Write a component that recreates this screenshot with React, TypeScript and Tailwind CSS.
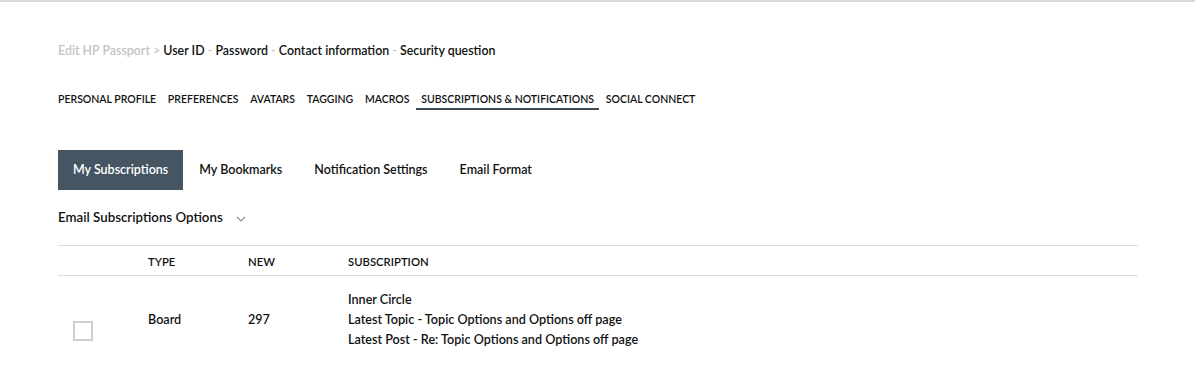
const navItems = [
  "Personal Profile",
  "Preferences",
  "Avatars",
  "Tagging",
  "Macros",
  "Subscriptions & Notifications",
  "Social Connect",
];

const subTabs = ["My Subscriptions", "My Bookmarks", "Notification Settings", "Email Format"];

export default function App() {
  return (
    <div className="min-h-[365px] w-[1195px] bg-white border-t-2 border-[#dadada] font-['Lato',sans-serif] text-[#111]">
      <div className="pl-[58px] pr-[57px]">
        <div className="pt-[40px] h-[80px] text-[12.4px] font-semibold">
          <span className="text-[#c4c4c4]">Edit HP Passport &gt; </span>
          User ID <span className="text-[#c4c4c4]">-</span> Password{" "}
          <span className="text-[#c4c4c4]">-</span> Contact information{" "}
          <span className="text-[#c4c4c4]">-</span> Security question
        </div>

        <nav className="flex gap-[11.7px] text-[10.5px] font-semibold uppercase">
          {navItems.map((item, i) => (
            <div
              key={item}
              className={
                i === 5
                  ? "h-[28px] pt-[10px] px-[5px] -mx-[5px] border-b-2 border-[#3d4d59]"
                  : "h-[28px] pt-[10px]"
              }
            >
              {item}
            </div>
          ))}
        </nav>

        <div className="mt-[40px] flex text-[12.5px] font-semibold">
          {subTabs.map((t, i) => (
            <div
              key={t}
              className={
                i === 0
                  ? "h-[40px] flex items-center px-[15px] bg-[#455561] text-white"
                  : "h-[40px] flex items-center px-[16px]"
              }
            >
              {t}
            </div>
          ))}
        </div>

        <div className="mt-[18px] flex items-center gap-[13px] text-[13.3px] font-semibold">
          Email Subscriptions Options
          <svg width="10" height="6" viewBox="0 0 10 6" className="mt-[2px]">
            <path d="M1 1l4 4 4-4" fill="none" stroke="#8494a2" strokeWidth="1.2" />
          </svg>
        </div>

        <table className="mt-[17px] w-full text-[12.6px] font-semibold">
          <thead>
            <tr className="border-y border-[#dcdcdc] text-[11.3px] uppercase text-left">
              <th className="w-[90px] h-[30px]"></th>
              <th className="w-[100px] font-semibold pt-[4px]">Type</th>
              <th className="w-[100px] font-semibold pt-[4px]">New</th>
              <th className="font-semibold pt-[4px]">Subscription</th>
            </tr>
          </thead>
          <tbody>
            <tr className="align-top">
              <td className="pl-[15px] pt-[45px]">
                <div className="w-[20px] h-[20px] border-2 border-[#cfcfcf]"></div>
              </td>
              <td className="pt-[34px] leading-[20px]">Board</td>
              <td className="pt-[34px] leading-[20px]">297</td>
              <td className="pt-[14px] leading-[20px]">
                <div>Inner Circle</div>
                <div>Latest Topic - Topic Options and Options off page</div>
                <div>Latest Post - Re: Topic Options and Options off page</div>
              </td>
            </tr>
          </tbody>
        </table>
      </div>
    </div>
  );
}
